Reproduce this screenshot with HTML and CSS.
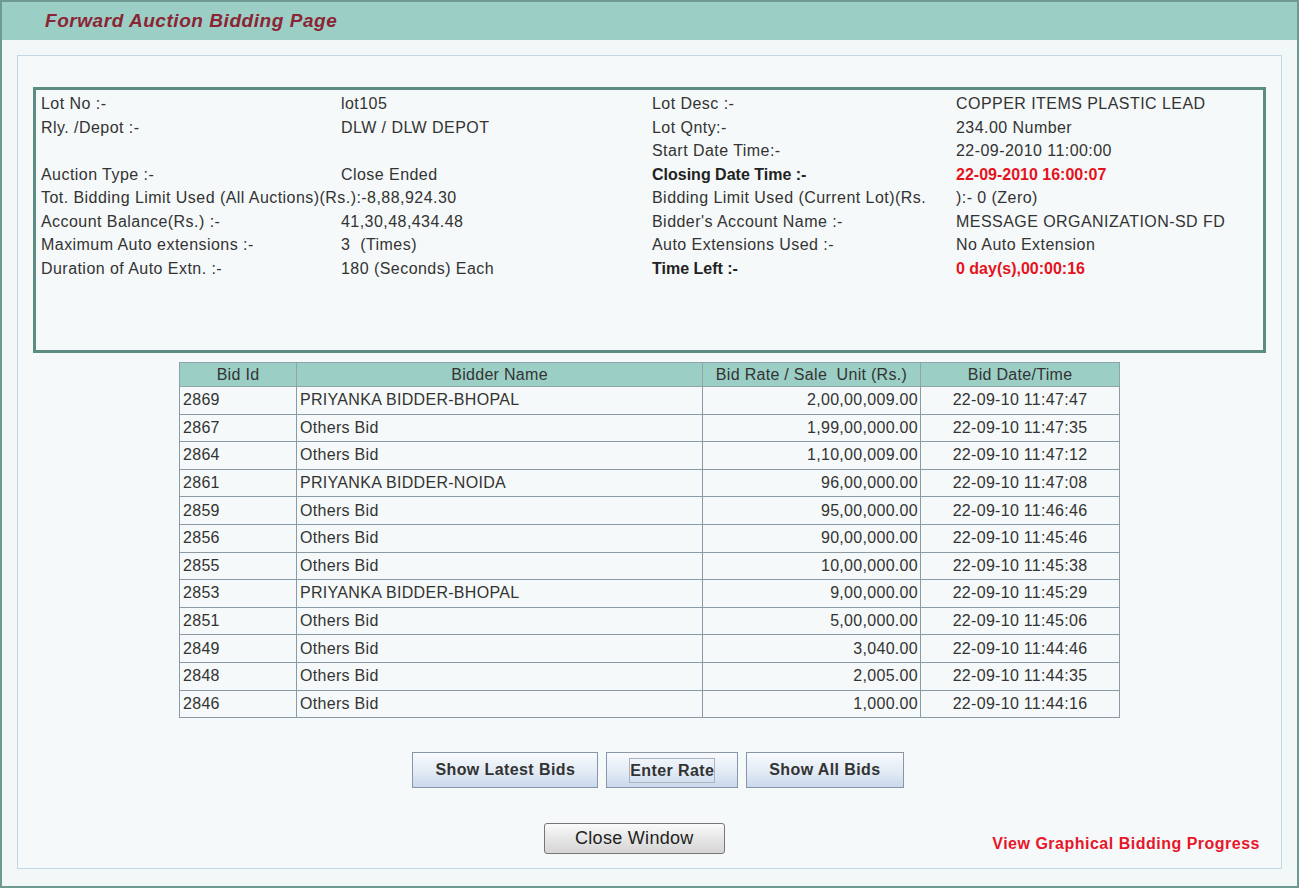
FILE: index.html
```html
<!DOCTYPE html>
<html lang="en">
<head>
<meta charset="utf-8">
<title>Forward Auction Bidding Page</title>
<link rel="stylesheet" href="styles.css">
</head>
<body>
<div class="page">
  <div class="page-header">
    <h1 class="page-title">Forward Auction Bidding Page</h1>
  </div>
  <div class="panel">
    <div class="info">
      <span>Lot No :-</span><span>lot105</span><span>Lot Desc :-</span><span>COPPER ITEMS PLASTIC LEAD</span>
      <span>Rly. /Depot :-</span><span>DLW / DLW DEPOT</span><span>Lot Qnty:-</span><span>234.00 Number</span>
      <span></span><span></span><span>Start Date Time:-</span><span>22-09-2010 11:00:00</span>
      <span>Auction Type :-</span><span>Close Ended</span><span class="strong">Closing Date Time :-</span><span class="alert">22-09-2010 16:00:07</span>
      <span class="span2">Tot. Bidding Limit Used (All Auctions)(Rs.):-8,88,924.30</span><span>Bidding Limit Used (Current Lot)(Rs.</span><span>):- 0 (Zero)</span>
      <span>Account Balance(Rs.) :-</span><span>41,30,48,434.48</span><span>Bidder's Account Name :-</span><span>MESSAGE ORGANIZATION-SD FD</span>
      <span>Maximum Auto extensions :-</span><span>3&nbsp;&nbsp;(Times)</span><span>Auto Extensions Used :-</span><span>No Auto Extension</span>
      <span>Duration of Auto Extn. :-</span><span>180 (Seconds) Each</span><span class="strong">Time Left :-</span><span class="alert">0 day(s),00:00:16</span>
    </div>

    <table class="bids">
      <colgroup>
        <col class="c-id"><col class="c-name"><col class="c-rate"><col class="c-date">
      </colgroup>
      <thead>
        <tr><th>Bid Id</th><th>Bidder Name</th><th>Bid Rate / Sale&nbsp;&nbsp;Unit (Rs.)</th><th>Bid Date/Time</th></tr>
      </thead>
      <tbody>
        <tr><td>2869</td><td>PRIYANKA BIDDER-BHOPAL</td><td class="num">2,00,00,009.00</td><td class="dt">22-09-10 11:47:47</td></tr>
        <tr><td>2867</td><td>Others Bid</td><td class="num">1,99,00,000.00</td><td class="dt">22-09-10 11:47:35</td></tr>
        <tr><td>2864</td><td>Others Bid</td><td class="num">1,10,00,009.00</td><td class="dt">22-09-10 11:47:12</td></tr>
        <tr><td>2861</td><td>PRIYANKA BIDDER-NOIDA</td><td class="num">96,00,000.00</td><td class="dt">22-09-10 11:47:08</td></tr>
        <tr><td>2859</td><td>Others Bid</td><td class="num">95,00,000.00</td><td class="dt">22-09-10 11:46:46</td></tr>
        <tr><td>2856</td><td>Others Bid</td><td class="num">90,00,000.00</td><td class="dt">22-09-10 11:45:46</td></tr>
        <tr><td>2855</td><td>Others Bid</td><td class="num">10,00,000.00</td><td class="dt">22-09-10 11:45:38</td></tr>
        <tr><td>2853</td><td>PRIYANKA BIDDER-BHOPAL</td><td class="num">9,00,000.00</td><td class="dt">22-09-10 11:45:29</td></tr>
        <tr><td>2851</td><td>Others Bid</td><td class="num">5,00,000.00</td><td class="dt">22-09-10 11:45:06</td></tr>
        <tr><td>2849</td><td>Others Bid</td><td class="num">3,040.00</td><td class="dt">22-09-10 11:44:46</td></tr>
        <tr><td>2848</td><td>Others Bid</td><td class="num">2,005.00</td><td class="dt">22-09-10 11:44:35</td></tr>
        <tr><td>2846</td><td>Others Bid</td><td class="num">1,000.00</td><td class="dt">22-09-10 11:44:16</td></tr>
      </tbody>
    </table>

    <div class="actions">
      <button class="btn" type="button">Show Latest Bids</button>
      <button class="btn" type="button"><span class="focus">Enter Rate</span></button>
      <button class="btn" type="button">Show All Bids</button>
    </div>

    <div class="footer-row">
      <span></span>
      <button class="btn-close" type="button">Close Window</button>
      <a class="graph-link" href="#">View Graphical Bidding Progress</a>
    </div>
  </div>
</div>
</body>
</html>
```

FILE: styles.css
```css
html, body {
  margin: 0;
  padding: 0;
}

body {
  font-family: "Liberation Sans", Arial, sans-serif;
  color: #333;
  background: #f2f7f7;
}

.page {
  width: 1299px;
  height: 888px;
  box-sizing: border-box;
  border: 2px solid #6f9a92;
  background: #f2f7f7;
  display: flex;
  flex-direction: column;
}

.page-header {
  flex: none;
  height: 38px;
  background: #9bcfc5;
  display: flex;
  align-items: center;
  padding-left: 43px;
}

.page-title {
  margin: 0;
  font-size: 19px;
  font-weight: bold;
  font-style: italic;
  letter-spacing: 0.55px;
  color: #8b2434;
}

.panel {
  flex: 1;
  margin: 15px 15px 17px 15px;
  border: 1px solid #c3d8e3;
  background: #f5f9f9;
  display: flex;
  flex-direction: column;
  padding: 31px 15px 0 15px;
}

.info {
  flex: none;
  height: 266px;
  box-sizing: border-box;
  border: 3px solid #5d8c83;
  padding: 2px 5px 0 5px;
  display: grid;
  grid-template-columns: 300px 311px 304px 1fr;
  grid-auto-rows: 23.5px;
  align-content: start;
  font-size: 16px;
  letter-spacing: 0.45px;
  line-height: 23.5px;
  white-space: nowrap;
  color: #333;
}

.span2 {
  grid-column: span 2;
}

.strong {
  font-weight: bold;
  color: #222;
  letter-spacing: 0;
}

.alert {
  font-weight: bold;
  color: #e5131d;
  letter-spacing: 0;
}

.bids {
  flex: none;
  width: 940px;
  margin: 9px auto 0 auto;
  border-collapse: collapse;
  table-layout: fixed;
  font-size: 16px;
  letter-spacing: 0.3px;
  color: #333;
  border: 1px solid #8799a4;
}

.c-id { width: 117px; }
.c-name { width: 406px; }
.c-rate { width: 218px; }
.c-date { width: 199px; }

.bids thead tr {
  height: 24px;
}

.bids th {
  background: #9bcfc5;
  font-weight: normal;
  border: 1px solid #8fa3ad;
  padding: 0;
  color: #333;
}

.bids tbody tr {
  height: 27.6px;
}

.bids td {
  border: 1px solid #8a9ba5;
  padding: 0 3px;
  white-space: nowrap;
}

.bids td.num {
  text-align: right;
  padding-right: 2px;
}

.bids td.dt {
  text-align: center;
}

.actions {
  flex: none;
  display: flex;
  justify-content: center;
  gap: 8px;
  margin-top: 34px;
  padding-left: 17px;
}

.btn {
  height: 36px;
  padding: 0 22px;
  border: 1px solid #8797a8;
  background: linear-gradient(#f8fafd, #e3ebf5 55%, #c9d8ec);
  font-family: "Liberation Sans", Arial, sans-serif;
  font-size: 16px;
  font-weight: bold;
  letter-spacing: 0.4px;
  color: #333;
}

.focus {
  display: inline-block;
  border: 1px solid #aab4c0;
  line-height: 23px;
  padding: 0;
}

.footer-row {
  flex: none;
  display: grid;
  grid-template-columns: 511px auto 1fr;
  align-items: center;
  margin-top: 35px;
  padding-right: 6px;
}

.btn-close {
  height: 31px;
  padding: 0 30px;
  border: 1px solid #767676;
  border-radius: 3px;
  background: linear-gradient(#fafafa, #e6e6e6 50%, #d5d5d5);
  font-family: "Liberation Sans", Arial, sans-serif;
  font-size: 18px;
  letter-spacing: 0.3px;
  color: #222;
}

.graph-link {
  justify-self: end;
  margin-top: 10px;
  font-size: 16px;
  font-weight: bold;
  letter-spacing: 0.5px;
  color: #e8162a;
  text-decoration: none;
}
```
